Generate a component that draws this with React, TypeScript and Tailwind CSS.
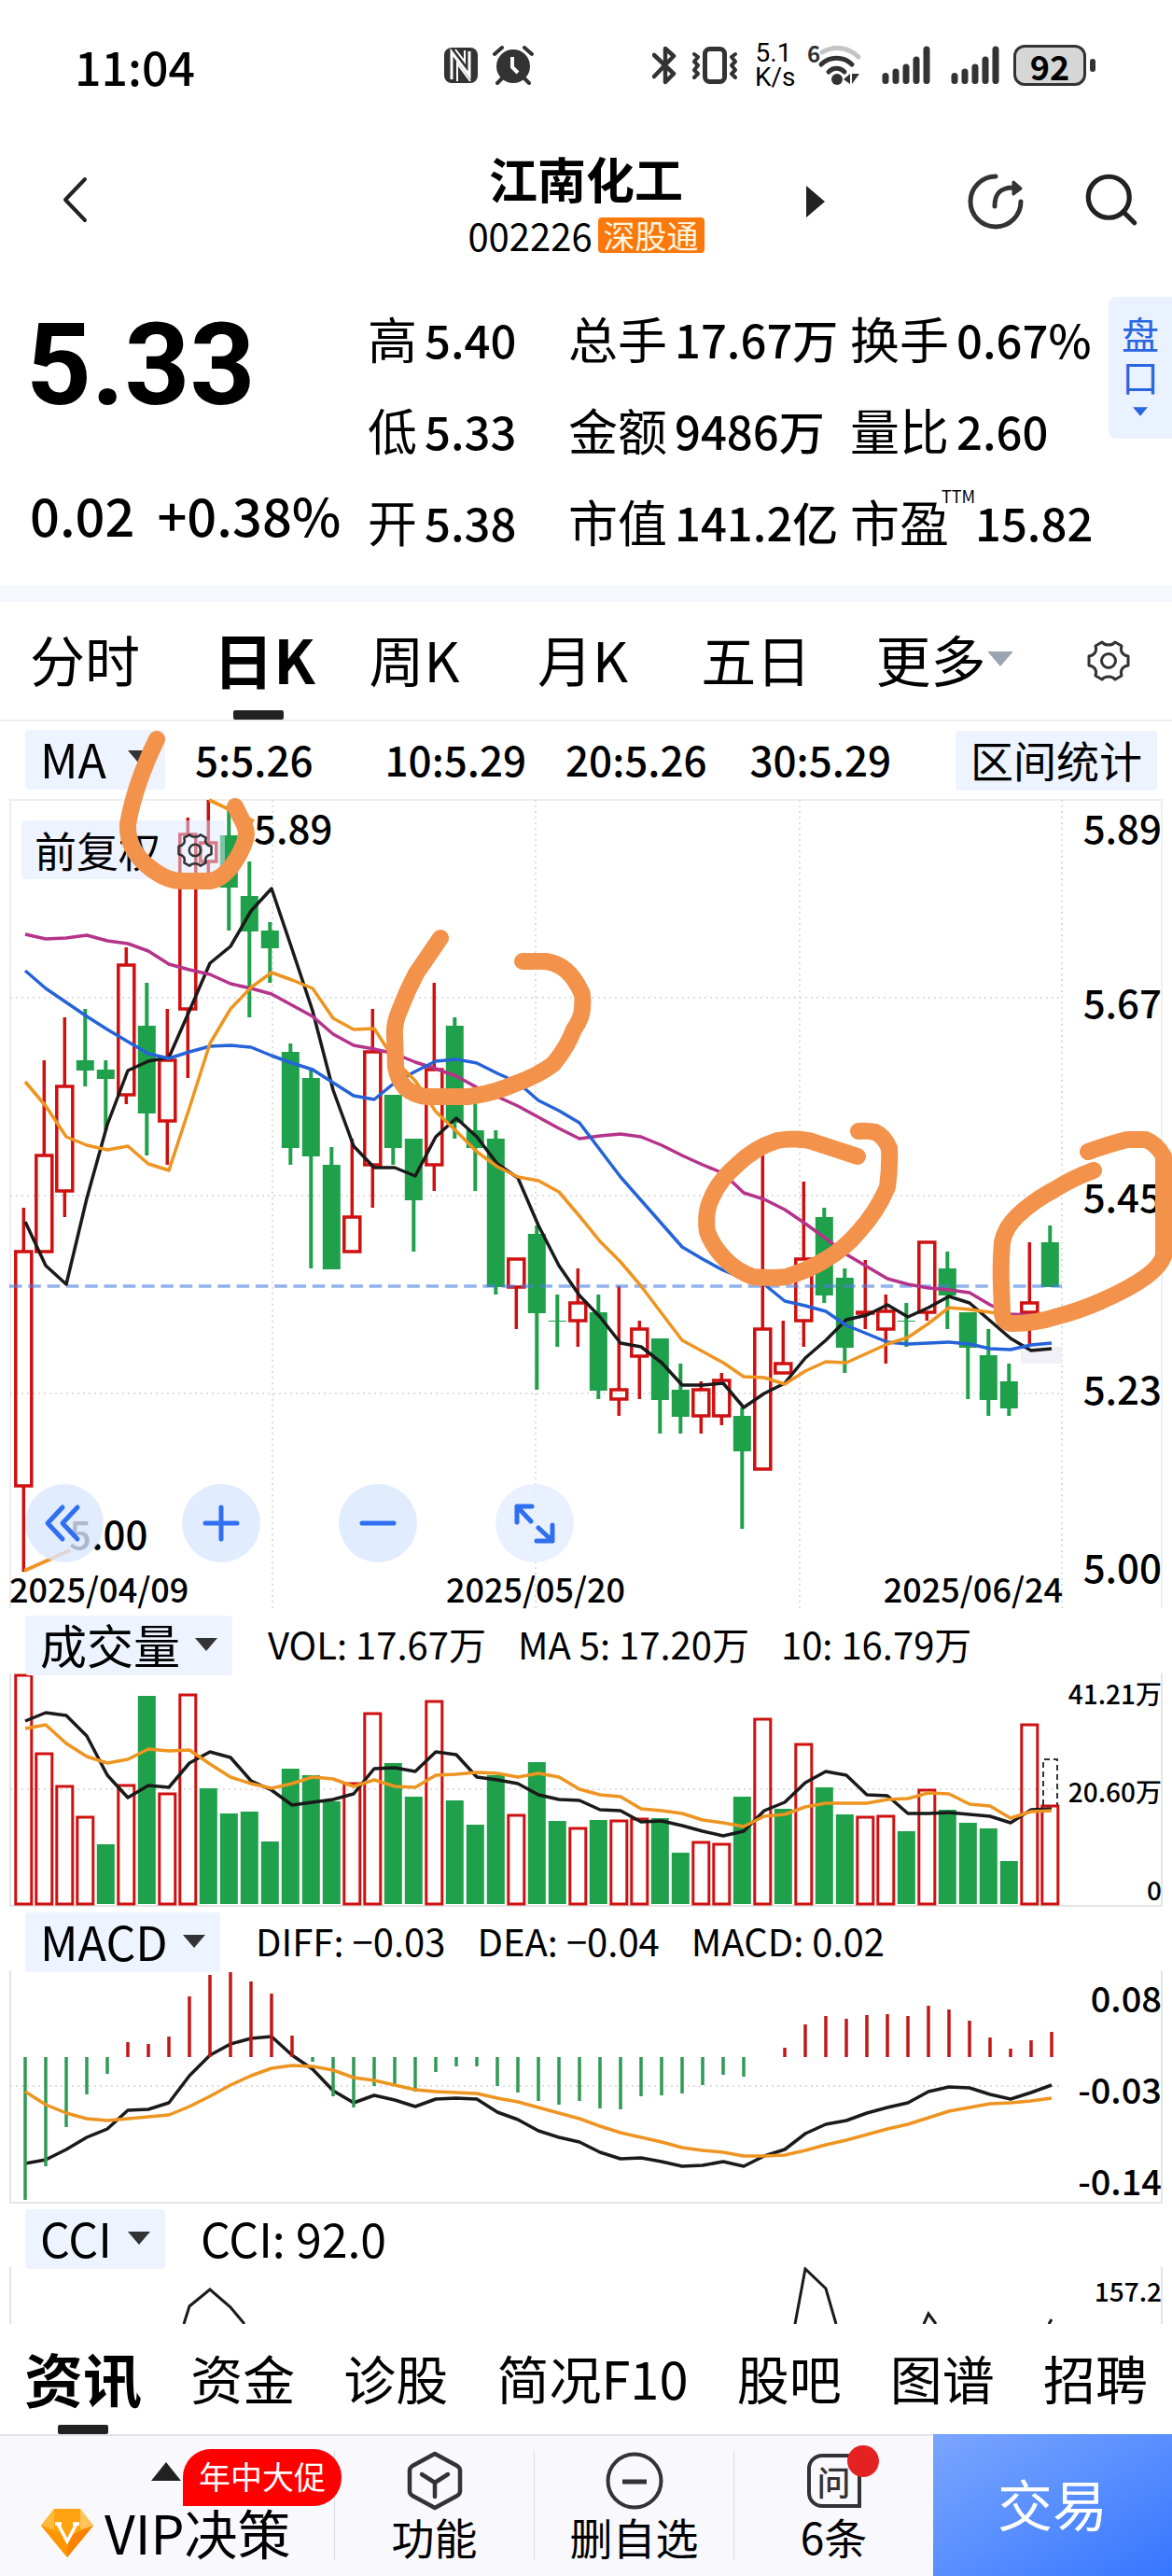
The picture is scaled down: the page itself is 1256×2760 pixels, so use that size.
import { ReactNode } from "react";
import { FiSearch } from "react-icons/fi";

type Candle = [up: number, high: number, top: number, bottom: number, low: number];

const RED = "#cf1010";
const GREEN = "#1fa04a";
const BLACK = "#1a1a1a";
const ORANGE = "#ee9420";

// 51 trading days, vertical values are in chart units
const candles: Candle[] = [
  [1, 1294, 1341, 1592, 1684],
  [1, 1136, 1238, 1341, 1341],
  [1, 1090, 1164, 1276, 1304],
  [0, 1081, 1136, 1147, 1164],
  [0, 1136, 1146, 1156, 1211],
  [1, 1015, 1034, 1173, 1183],
  [0, 1053, 1099, 1193, 1238],
  [1, 1081, 1136, 1201, 1248],
  [1, 876, 894, 1081, 1155],
  [1, 857, 903, 923, 940],
  [0, 868, 895, 951, 997],
  [0, 923, 960, 998, 1090],
  [0, 988, 997, 1016, 1053],
  [0, 1118, 1127, 1230, 1248],
  [0, 1146, 1155, 1239, 1359],
  [0, 1229, 1248, 1360, 1360],
  [1, 1220, 1304, 1341, 1341],
  [1, 1081, 1127, 1248, 1294],
  [0, 1173, 1173, 1230, 1248],
  [0, 1220, 1220, 1286, 1341],
  [1, 1053, 1146, 1248, 1276],
  [0, 1090, 1099, 1203, 1220],
  [0, 1173, 1211, 1230, 1276],
  [0, 1211, 1220, 1379, 1387],
  [1, 1349, 1349, 1379, 1424],
  [0, 1313, 1322, 1407, 1489],
  [0, 1387, 1415, 1416, 1443],
  [1, 1359, 1396, 1415, 1443],
  [0, 1387, 1406, 1490, 1499],
  [1, 1378, 1489, 1499, 1517],
  [1, 1415, 1424, 1453, 1499],
  [0, 1434, 1434, 1500, 1536],
  [0, 1461, 1489, 1518, 1536],
  [1, 1480, 1489, 1517, 1536],
  [1, 1471, 1479, 1517, 1527],
  [0, 1508, 1517, 1555, 1638],
  [1, 1238, 1424, 1574, 1574],
  [1, 1415, 1461, 1471, 1471],
  [1, 1266, 1349, 1415, 1443],
  [0, 1294, 1304, 1388, 1396],
  [0, 1359, 1369, 1444, 1471],
  [1, 1350, 1406, 1407, 1424],
  [1, 1387, 1405, 1424, 1461],
  [0, 1396, 1415, 1416, 1443],
  [1, 1331, 1331, 1406, 1415],
  [0, 1341, 1359, 1388, 1424],
  [0, 1406, 1406, 1444, 1499],
  [0, 1424, 1452, 1500, 1517],
  [0, 1461, 1480, 1509, 1517],
  [1, 1331, 1396, 1406, 1440],
  [0, 1313, 1331, 1379, 1379],
];

const ma5 = [
  1309, 1356, 1376, 1284, 1205, 1147, 1137, 1133, 1083, 1032, 1014, 976, 952, 1017, 1083, 1168, 1228,
  1251, 1251, 1260, 1218, 1198, 1218, 1247, 1262, 1313, 1356, 1388, 1411, 1439, 1443, 1460, 1484, 1484,
  1482, 1508, 1493, 1482, 1455, 1436, 1414, 1409, 1398, 1411, 1401, 1389, 1396, 1415, 1434, 1447, 1445,
];
const ma10 = [
  1159, 1185, 1218, 1227, 1232, 1228, 1247, 1254, 1187, 1118, 1081, 1058, 1042, 1050, 1059, 1091, 1103,
  1102, 1136, 1158, 1191, 1212, 1234, 1250, 1261, 1265, 1277, 1303, 1330, 1352, 1378, 1407, 1436, 1448,
  1460, 1475, 1476, 1483, 1469, 1459, 1460, 1450, 1440, 1433, 1418, 1401, 1403, 1406, 1409,
];
const ma20 = [
  1040, 1059, 1074, 1089, 1103, 1116, 1129, 1134, 1127, 1121, 1120, 1122, 1131, 1139, 1146, 1160, 1174,
  1178, 1160, 1148, 1137, 1135, 1139, 1150, 1160, 1179, 1190, 1203, 1232, 1261, 1286, 1311, 1336, 1349,
  1361, 1370, 1376, 1394, 1399, 1405, 1420, 1429, 1438, 1440, 1439, 1438, 1440, 1445, 1446, 1441, 1439,
];
const ma30 = [
  1001, 1006, 1005, 1002, 1008, 1011, 1019, 1033, 1039, 1044, 1054, 1059, 1065, 1077, 1089, 1108, 1120,
  1124, 1129, 1138, 1145, 1153, 1165, 1175, 1185, 1197, 1209, 1220, 1217, 1215, 1218, 1227, 1238, 1248,
  1257, 1278, 1285, 1296, 1311, 1327, 1344, 1357, 1370, 1376, 1380, 1382, 1385, 1398, 1408, 1409,
];

const volumes: [number, number][] = [
  [1, 1795], [1, 1879], [1, 1914], [1, 1947], [0, 1976], [1, 1913], [0, 1817], [1, 1922], [1, 1816],
  [0, 1916], [0, 1943], [0, 1941], [0, 1973], [0, 1895], [0, 1902], [0, 1930], [1, 1911], [1, 1836],
  [0, 1889], [0, 1925], [1, 1823], [0, 1929], [0, 1955], [0, 1902], [1, 1945], [0, 1888], [0, 1951],
  [1, 1959], [0, 1950], [1, 1951], [1, 1949], [0, 1948], [0, 1985], [1, 1974], [1, 1976], [0, 1925],
  [1, 1842], [0, 1938], [1, 1869], [0, 1915], [0, 1944], [1, 1947], [1, 1946], [0, 1962], [1, 1918],
  [0, 1939], [0, 1953], [0, 1959], [0, 1994], [1, 1848], [1, 1935],
];
const volMa5 = [
  1844, 1835, 1838, 1860, 1902, 1926, 1913, 1915, 1889, 1877, 1883, 1908, 1918, 1934, 1931, 1928, 1922,
  1895, 1894, 1898, 1877, 1880, 1904, 1907, 1911, 1923, 1928, 1929, 1939, 1940, 1952, 1951, 1956, 1962,
  1967, 1962, 1940, 1931, 1910, 1898, 1902, 1923, 1924, 1943, 1943, 1942, 1944, 1946, 1953, 1939, 1938,
];
const volMa10 = [
  1852, 1848, 1868, 1882, 1889, 1885, 1874, 1876, 1875, 1890, 1904, 1911, 1916, 1911, 1904, 1906, 1914,
  1907, 1914, 1915, 1902, 1901, 1899, 1900, 1904, 1900, 1904, 1917, 1923, 1925, 1938, 1940, 1943, 1950,
  1953, 1957, 1946, 1944, 1936, 1932, 1932, 1932, 1928, 1927, 1921, 1922, 1933, 1935, 1948, 1941, 1940,
];

const MACD_ZERO = 2204;
const macd = [
  2357, 2321, 2279, 2244, 2222, 2188, 2190, 2182, 2139, 2116, 2113, 2123, 2136, 2181, 2209, 2246, 2258,
  2235, 2234, 2241, 2220, 2214, 2214, 2235, 2242, 2251, 2255, 2251, 2259, 2260, 2246, 2245, 2243, 2234,
  2223, 2225, 2204, 2194, 2169, 2160, 2163, 2159, 2158, 2160, 2149, 2153, 2165, 2183, 2195, 2186, 2177,
];
const diff = [
  2318, 2314, 2303, 2290, 2281, 2261, 2260, 2253, 2224, 2202, 2190, 2184, 2182, 2202, 2217, 2240, 2253,
  2245, 2250, 2257, 2249, 2248, 2249, 2263, 2271, 2283, 2290, 2295, 2306, 2313, 2312, 2316, 2321, 2320,
  2316, 2321, 2310, 2303, 2286, 2276, 2272, 2264, 2258, 2253, 2241, 2236, 2237, 2244, 2249, 2242, 2234,
];
const dea = [
  2241, 2255, 2264, 2270, 2272, 2270, 2268, 2266, 2257, 2246, 2234, 2224, 2216, 2213, 2214, 2218, 2226,
  2229, 2234, 2239, 2241, 2242, 2243, 2248, 2252, 2258, 2264, 2270, 2278, 2285, 2290, 2295, 2301, 2304,
  2306, 2310, 2310, 2309, 2304, 2298, 2293, 2287, 2281, 2276, 2269, 2262, 2258, 2254, 2253, 2251, 2248,
];

const barX = (i: number) => 25.3 + i * 22;
const lineX = (i: number) => 27 + i * 22;

function Line({ data, color }: { data: number[]; color: string }) {
  return (
    <polyline
      points={data.map((y, i) => `${lineX(i)},${y}`).join(" ")}
      fill="none"
      stroke={color}
      strokeWidth="3.500"
      strokeLinejoin="round"
    />
  );
}

function Triangle({ className }: { className: string }) {
  return (
    <svg viewBox="0 0 24 14" className={className} aria-hidden="true">
      <path d="M0 0h24L12 14z" fill="currentColor" />
    </svg>
  );
}

function Gear({ className }: { className: string }) {
  return (
    <svg viewBox="0 0 48 48" className={className} fill="none" stroke="currentColor" strokeWidth="3" strokeLinejoin="round" aria-hidden="true">
      <path d="M17 4c3 4 11 4 14 0l7 4c-2 6 1 10 7 11v10c-6 1-9 5-7 11l-7 4c-3-4-11-4-14 0l-7-4c2-6-1-10-7-11V19c6-1 9-5 7-11z" />
      <circle cx="24" cy="24" r="7.5" />
    </svg>
  );
}

function IndicatorSelect({ name, label }: { name: string; label: string }) {
  return (
    <div className="relative shrink-0">
      <select
        aria-label={label}
        className="h-16 min-w-[150px] appearance-none rounded-sm bg-[#edf3ff] pr-14 pb-1 pl-4 text-[50px] leading-[60px] text-black"
      >
        <option>{name}</option>
      </select>
      <Triangle className="pointer-events-none absolute top-6 right-4 h-[14px] w-6 text-[#333]" />
    </div>
  );
}

function IndicatorHeader({ name, label, children }: { name: string; label: string; children: ReactNode }) {
  return (
    <div className="flex h-[70px] gap-[38px] pt-2 pl-[27px] whitespace-nowrap">
      <IndicatorSelect name={name} label={label} />
      {children}
    </div>
  );
}

function StatusBar() {
  return (
    <div className="flex h-36 items-center pr-[82px] pb-1 pl-20">
      <span className="w-[396px] text-[50px] leading-[56px] font-medium">11:04</span>
      <div className="flex items-center gap-4">
        <svg viewBox="0 0 36 38" className="h-[38px] w-9" aria-hidden="true">
          <rect width="36" height="38" rx="8" fill="#333" />
          <path d="M8 34V5l19 25V4" fill="none" stroke="#fff" strokeWidth="3" />
          <path d="M14 36V17l14 19M22 3v12L12 2" fill="none" stroke="#fff" strokeWidth="2" />
        </svg>
        <svg viewBox="0 0 44 42" className="h-[42px] w-11" aria-hidden="true">
          <circle cx="22" cy="22" r="18" fill="#333" />
          <path d="M2 9l8-7M42 9l-8-7M10 35l-5 5M34 35l5 5" stroke="#333" strokeWidth="4" strokeLinecap="round" />
          <path d="M21 12v11l6 6" fill="none" stroke="#fff" strokeWidth="4" />
        </svg>
      </div>
      <div className="ml-auto flex items-center">
        <svg viewBox="0 0 26 42" className="h-[42px] w-[26px]" fill="none" stroke="#333" strokeWidth="4.500" strokeLinejoin="round" strokeLinecap="round" aria-hidden="true">
          <path d="M2 10l21 20-9 9V3l9 8L2 33" />
        </svg>
        <svg viewBox="0 0 50 42" className="ml-4 h-[42px] w-[50px]" fill="none" stroke="#333" aria-hidden="true">
          <rect x="14.500" y="3.500" width="21" height="35" rx="5" strokeWidth="5" />
          <path d="M3 9l4 3-4 5 4 4-4 5 4 4-4 4M47 9l-4 3 4 5-4 4 4 5-4 4 4 4" strokeWidth="4" strokeLinecap="round" strokeLinejoin="round" />
        </svg>
        <div className="ml-[18px] w-10 text-center font-[Roboto,sans-serif] text-[28px] leading-[26px]">
          <div>5.1</div>
          <div>K/s</div>
        </div>
        <svg viewBox="0 0 58 44" className="ml-4 h-11 w-[58px] overflow-visible" aria-hidden="true">
          <text x="0" y="19" fontSize="24" fontWeight="700" fill="#333">6</text>
          <g fill="none" strokeWidth="5" strokeLinecap="round">
            <path d="M16 8c12-7 28-6 39 5" stroke="#c4c4c4" />
            <path d="M15 21c9-9 24-9 33 0M23 29c5-5 12-5 17 0" stroke="#333" />
          </g>
          <circle cx="32" cy="37" r="6" fill="#333" />
          <path d="M46 31v11l-7-5zM48 31v11l8-11z" fill="#333" />
        </svg>
        {[0, 1].map((n) => (
          <svg key={n} viewBox="0 0 52 42" className="ml-[22px] h-[42px] w-[52px]" stroke="#333" strokeWidth="7" strokeLinecap="round" aria-hidden="true">
            <path d="M4 32.500v5M15 28v9.500M26 23v14.500M37 15v22.500M48 4v33.500" />
          </svg>
        ))}
        <div className="ml-[15px] flex h-11 w-[78px] items-center justify-center rounded-xl border-[3px] border-[#333] bg-[#d6d6d6] text-4xl leading-9 font-bold">
          92
        </div>
        <div className="ml-1 h-3.5 w-1.5 rounded-full bg-[#333]" />
      </div>
    </div>
  );
}

function Header() {
  return (
    <header className="relative flex h-36 items-center justify-between pr-8 pl-[66px]">
      <button type="button" aria-label="返回" className="pb-1">
        <svg viewBox="0 0 28 50" className="h-[50px] w-7" fill="none" stroke="#222" strokeWidth="4" strokeLinecap="round" strokeLinejoin="round">
          <path d="M25 3L4 25l21 22" />
        </svg>
      </button>
      <div className="absolute inset-x-0 top-4 mx-auto flex w-[260px] flex-col items-center">
        <h1 className="text-[52px] leading-[62px] font-bold">江南化工</h1>
        <div className="flex h-[60px] items-center gap-1.5 text-[40px]">
          <span className="leading-[60px]">002226</span>
          <span className="rounded-sm bg-[#fa780c] px-1.5 text-[34px] leading-[38px] text-[#fff6e0]">深股通</span>
        </div>
      </div>
      <div className="flex items-center">
        <button type="button" aria-label="下一只" className="mr-[152px]">
          <svg viewBox="0 0 20 34" className="h-[34px] w-5">
            <path d="M0 0l20 17L0 34z" fill="#222" />
          </svg>
        </button>
        <button type="button" aria-label="分享" className="mr-[60px]">
          <svg viewBox="0 0 62 62" className="h-[62px] w-[62px]" fill="none" stroke="#333" strokeWidth="5" strokeLinecap="round">
            <path d="M31 4A27 27 0 1 0 58 31" />
            <path d="M30 36c0-14 6-20 20-20" />
            <path d="M50 10l8 7-8 6z" fill="#333" strokeWidth="3" strokeLinejoin="round" />
          </svg>
        </button>
        <button type="button" aria-label="搜索" className="pb-1">
          <FiSearch className="size-[66px] stroke-[1.9] text-[#222]" />
        </button>
      </div>
    </header>
  );
}

function Quote({ label, value, sup }: { label: string; value: string; sup?: string }) {
  return (
    <div className="flex h-[98px] items-center gap-2 whitespace-nowrap">
      <dt className="relative text-[53px]">
        {label}
        {sup && <sup className="absolute top-0 left-[98px] text-lg leading-6">{sup}</sup>}
      </dt>
      <dd className={sup ? "ml-5 text-[49px] font-medium" : "text-[49px] font-medium"}>{value}</dd>
    </div>
  );
}

function QuotePanel() {
  return (
    <section className="relative grid grid-cols-[394fr_215fr_302fr_345fr] pt-[26px] pb-[19px]">
      <div className="flex flex-col pl-8 whitespace-nowrap">
        <div className="-ml-1 h-[180px] font-[Roboto,sans-serif] text-[122px] leading-[156px] font-bold">5.33</div>
        <div className="flex h-[114px] items-center gap-6 text-[56px] font-medium">
          <span>0.02</span>
          <span>+0.38%</span>
        </div>
      </div>
      <dl>
        <Quote label="高" value="5.40" />
        <Quote label="低" value="5.33" />
        <Quote label="开" value="5.38" />
      </dl>
      <dl>
        <Quote label="总手" value="17.67万" />
        <Quote label="金额" value="9486万" />
        <Quote label="市值" value="141.2亿" />
      </dl>
      <dl>
        <Quote label="换手" value="0.67%" />
        <Quote label="量比" value="2.60" />
        <Quote label="市盈" value="15.82" sup="TTM" />
      </dl>
      <button
        type="button"
        className="absolute top-[30px] right-0 flex h-[152px] w-[68px] flex-col items-center rounded-l-lg bg-[#eaf1ff] pt-4 text-[40px] leading-[46px] text-[#2a66e0]"
      >
        <span>盘</span>
        <span>口</span>
        <Triangle className="mt-2.5 h-2.5 w-4" />
      </button>
    </section>
  );
}

function PeriodTabs() {
  const plain = ["周K", "月K", "五日"];
  return (
    <nav className="grid h-32 grid-cols-[196fr_167fr_180fr_175fr_187fr_225fr_92fr] border-b-2 border-[#ececf0] pl-8 text-[59px] whitespace-nowrap">
      <button type="button" className="pb-1 text-left">分时</button>
      <button type="button" className="relative pb-1 text-left text-[65px] font-bold">
        日K
        <span className="absolute bottom-0 left-[22px] h-2.5 w-[54px] rounded-xs bg-[#222]" />
      </button>
      {plain.map((t) => (
        <button key={t} type="button" className="pb-1 text-left">{t}</button>
      ))}
      <button type="button" className="flex items-center pb-1">
        更多
        <Triangle className="h-4 w-8 text-[#9aa5b0]" />
      </button>
      <button type="button" aria-label="设置">
        <Gear className="size-12 text-[#333]" />
      </button>
    </nav>
  );
}

function Marks() {
  // freehand marker circles over the candles
  return (
    <svg
      viewBox="0 773 1256 950"
      className="pointer-events-none absolute inset-0 w-full"
      fill="none"
      stroke="#f2924b"
      strokeWidth="18"
      strokeLinecap="round"
      strokeLinejoin="round"
      aria-hidden="true"
    >
      <path d="M168 792C152 825 142 855 137 883C136 905 148 920 161 930S185 945 200 944H225C240 942 252 925 259 910S264 890 262 884L252 864" />
      <path d="M472 1005L446 1043Q436 1062 428 1083Q422 1097 423 1110L424 1143Q426 1156 434 1165Q444 1174 458 1175H502Q530 1171 550 1162Q578 1152 593 1140Q608 1122 615 1103Q624 1090 624 1080Q625 1067 623 1063Q616 1048 607 1040Q598 1032 585 1030H560" />
      <path d="M919 1239L867 1222Q850 1219 833 1222Q808 1230 790 1248Q770 1265 762 1285Q755 1300 758 1320Q764 1336 778 1350Q790 1362 807 1368Q828 1370 843 1368Q868 1360 884 1350Q905 1338 920 1320Q940 1298 951 1272Q954 1250 953 1230Q947 1217 938 1213Q930 1211 920 1212" />
      <path d="M1172 1254Q1150 1262 1131 1274Q1108 1286 1091 1302Q1077 1315 1074 1331Q1072 1355 1073 1376L1074 1408Q1076 1418 1084 1418Q1110 1418 1131 1411Q1158 1404 1180 1394Q1210 1381 1228 1368Q1243 1357 1247 1346V1239Q1240 1226 1228 1221H1208Q1188 1226 1166 1234" />
    </svg>
  );
}

const roundButton = "flex size-[84px] items-center justify-center rounded-full bg-[#dbe7ff]/80";

function KLine() {
  const icon = "size-[44px] fill-none stroke-[#2f6ff0] stroke-[5] [stroke-linecap:round] [stroke-linejoin:round]";
  return (
    <section className="relative">
      <div className="flex h-[83px] items-center pr-4 pl-[27px] text-[46px] whitespace-nowrap">
        <IndicatorSelect name="MA" label="主图指标" />
        <div className="ml-8 grid flex-1 grid-cols-[203fr_193fr_197fr_220fr] pb-1 text-[44px] font-medium">
          <span>5:5.26</span>
          <span>10:5.29</span>
          <span>20:5.26</span>
          <span>30:5.29</span>
        </div>
        <button type="button" className="h-16 rounded-sm bg-[#edf3ff] px-4 pb-1 leading-[60px]">区间统计</button>
      </div>
      <div className="relative">
        <svg viewBox="0 856 1256 867" className="block w-full overflow-visible" role="img" aria-label="日K线图">
          <path d="M11 1723V857H1245V1723" fill="none" stroke="#eeeeee" strokeWidth="2" />
          <path d="M11 1069H1138M11 1281H1138M11 1493H1138M292 857V1723M574 857V1723M857 857V1723M1138 857V1723" stroke="#dedede" strokeWidth="2" strokeDasharray="2 4" />
          <rect x="1094" y="1443" width="44" height="18" fill="#f0f0f6" />
          {candles.map(([up, high, top, bottom, low], i) => {
            const x = barX(i);
            return up ? (
              <g key={i} stroke={RED} strokeWidth="3.500" fill="none">
                <path d={`M${x} ${high}V${top}M${x} ${bottom}V${low}`} />
                <rect x={x - 8.5} y={top} width="17" height={bottom - top} />
              </g>
            ) : (
              <g key={i} fill={GREEN}>
                <rect x={x - 2} y={high} width="4" height={low - high} />
                <rect x={x - 9.5} y={top} width="19" height={bottom - top} />
              </g>
            );
          })}
          <path d="M10 1378H1138" stroke="#4a7fe0" strokeOpacity="0.6" strokeWidth="3.500" strokeDasharray="13.500 6.800" />
          <Line data={ma5} color={BLACK} />
          <Line data={ma30} color="#b5338a" />
          <Line data={ma20} color="#2563d8" />
          <Line data={ma10} color={ORANGE} />
          <path d="M224 857L245 867L272 880M26 1683L75 1661" fill="none" stroke={ORANGE} strokeWidth="4" />
          <g className="text-[42px] font-medium" fill="#000">
            <text x="272" y="904">5.89</text>
            <text x="74" y="1660">5.00</text>
            <g textAnchor="end">
              <text x="1245" y="904">5.89</text>
              <text x="1245" y="1091">5.67</text>
              <text x="1245" y="1299">5.45</text>
              <text x="1245" y="1505">5.23</text>
              <text x="1245" y="1696">5.00</text>
            </g>
          </g>
          <g className="text-[36px] font-medium" fill="#000">
            <text x="10" y="1717">2025/04/09</text>
            <text x="574" y="1717" textAnchor="middle">2025/05/20</text>
            <text x="1139" y="1717" textAnchor="end">2025/06/24</text>
          </g>
        </svg>
        <button
          type="button"
          className="absolute top-[23px] left-[23px] flex h-[63px] w-[218px] items-center justify-between rounded-sm bg-[#dce8ff]/50 pr-3 pl-3.5 text-[45px] leading-[63px] whitespace-nowrap"
        >
          前复权
          <Gear className="size-10 text-[#333]" />
        </button>
        <div className="absolute bottom-[49px] left-[27px] flex gap-[84px]">
          <button type="button" aria-label="向左" className={roundButton}>
            <svg viewBox="0 0 44 44" className={icon}>
              <path d="M20 5L4 22l16 17M36 5L20 22l16 17" />
            </svg>
          </button>
          <button type="button" aria-label="放大" className={roundButton}>
            <svg viewBox="0 0 44 44" className={icon}>
              <path d="M22 5v34M5 22h34" />
            </svg>
          </button>
          <button type="button" aria-label="缩小" className={roundButton}>
            <svg viewBox="0 0 44 44" className={icon}>
              <path d="M5 22h34" />
            </svg>
          </button>
          <button type="button" aria-label="全屏" className="flex size-[84px] items-center justify-center rounded-full bg-[#e4edff]/80">
            <svg viewBox="0 0 44 44" className={icon}>
              <path d="M3 21V4h16M3 4l15 16M41 24v17H24M41 41L26 27" />
            </svg>
          </button>
        </div>
      </div>
      <Marks />
    </section>
  );
}

function Volume() {
  return (
    <section>
      <IndicatorHeader name="成交量" label="成交量指标">
        <div className="flex gap-[34px] text-[40px] leading-[60px]">
          <span>VOL: 17.67万</span>
          <span>MA 5: 17.20万</span>
          <span>10: 16.79万</span>
        </div>
      </IndicatorHeader>
      <svg viewBox="0 1793 1256 248" className="block w-full overflow-visible" role="img" aria-label="成交量图">
        <path d="M11 1793V2042H1245V1793" fill="none" stroke="#e4e4e4" strokeWidth="2" />
        <path d="M11 1917H1138" stroke="#dedede" strokeWidth="2" strokeDasharray="2 4" />
        {volumes.map(([up, top], i) =>
          up ? (
            <rect key={i} x={barX(i) - 8.5} y={top} width="17" height={2040 - top} fill="none" stroke={RED} strokeWidth="3" />
          ) : (
            <rect key={i} x={barX(i) - 9.5} y={top} width="19" height={2040 - top} fill={GREEN} />
          ),
        )}
        <path d="M1118 1934V1885H1133V1934" fill="none" stroke="#333" strokeWidth="2" strokeDasharray="6 4" />
        <Line data={volMa5} color={BLACK} />
        <Line data={volMa10} color={ORANGE} />
        <g className="text-[28px] font-medium" textAnchor="end">
          <text x="1245" y="1826">41.21万</text>
          <text x="1245" y="1931">20.60万</text>
          <text x="1245" y="2036">0</text>
        </g>
      </svg>
    </section>
  );
}

function Macd() {
  return (
    <section>
      <IndicatorHeader name="MACD" label="副图指标">
        <div className="flex gap-[34px] text-[40px] leading-[60px]">
          <span>DIFF: −0.03</span>
          <span>DEA: −0.04</span>
          <span>MACD: 0.02</span>
        </div>
      </IndicatorHeader>
      <svg viewBox="0 2111 1256 248" className="block w-full overflow-visible" role="img" aria-label="MACD图">
        <path d="M11 2111V2360H1245V2111" fill="none" stroke="#e4e4e4" strokeWidth="2" />
        <path d="M11 2235H1138" stroke="#dedede" strokeWidth="2" strokeDasharray="2 4" />
        <Line data={diff} color={BLACK} />
        {macd.map((y, i) => (
          <path key={i} d={`M${lineX(i)} ${MACD_ZERO}V${y}`} stroke={y < MACD_ZERO ? "#c01818" : "#2f9a55"} strokeWidth="3.500" />
        ))}
        <Line data={dea} color={ORANGE} />
        <g className="text-[38px] font-medium" textAnchor="end">
          <text x="1245" y="2156">0.08</text>
          <text x="1245" y="2254">-0.03</text>
          <text x="1245" y="2352">-0.14</text>
        </g>
      </svg>
    </section>
  );
}

function Cci() {
  return (
    <section>
      <IndicatorHeader name="CCI" label="副图指标二">
        <span className="text-[50px] leading-[60px]">CCI: 92.0</span>
      </IndicatorHeader>
      <svg viewBox="0 2429 1256 61" className="block w-full" role="img" aria-label="CCI图">
        <path d="M11 2429V2490M1245 2429V2490" stroke="#e4e4e4" strokeWidth="2" />
        <path
          d="M197 2490L203 2471L225 2453L247 2472L262 2490M852 2490L863 2431L885 2452L896 2490M990 2490L995 2479L1003 2490M1124 2490L1127 2485"
          fill="none"
          stroke={BLACK}
          strokeWidth="3"
        />
        <text x="1245" y="2466" textAnchor="end" className="text-[28px] font-medium">157.2</text>
      </svg>
    </section>
  );
}

function InfoTabs() {
  const tabs = ["资金", "诊股", "简况F10", "股吧", "图谱", "招聘"];
  return (
    <nav className="flex h-[118px] items-stretch justify-between px-[26px] text-[56px] whitespace-nowrap">
      <button type="button" className="relative pb-1 text-[63px] font-bold">
        资讯
        <span className="absolute bottom-0 left-9 h-2.5 w-[54px] rounded-xs bg-[#222]" />
      </button>
      {tabs.map((t) => (
        <button key={t} type="button" className="pb-1">{t}</button>
      ))}
    </nav>
  );
}

function BarItem({ label, children }: { label: string; children: ReactNode }) {
  return (
    <button type="button" className="my-4 flex flex-col items-center border-l border-[#dcdce2] text-[46px] leading-[54px]">
      {children}
      <span>{label}</span>
    </button>
  );
}

function BottomBar() {
  return (
    <div className="grid h-[152px] grid-cols-[358fr_214fr_214fr_214fr_256fr] border-t-2 border-[#e2e2e8] bg-[#f8f8fd] whitespace-nowrap">
      <button type="button" className="relative flex items-end pb-2.5 pl-11 text-[57px] leading-[76px]">
        <svg viewBox="0 0 56 52" className="mb-2.5 h-[52px] w-14" aria-hidden="true">
          <path d="M14 0h28l14 18-28 34L0 18z" fill="#ffa312" />
          <path d="M14 0L0 18l14 4z" fill="#ffb93c" />
          <path d="M42 0l14 18-14 4z" fill="#ffc55c" />
          <path d="M0 18l28 34V30z" fill="#ff9500" />
          <path d="M56 18L28 52V30z" fill="#f98200" />
          <path d="M18 16l10 19 10-19M15 16h7M34 16h7" fill="none" stroke="#fff" strokeWidth="3.500" />
        </svg>
        <span className="ml-3">VIP决策</span>
        <svg viewBox="0 0 32 20" className="absolute top-7 left-[162px] h-5 w-8" aria-hidden="true">
          <path d="M16 0l16 20H0z" fill="#222" />
        </svg>
        <span className="absolute top-3.5 left-[196px] z-10 h-[61px] rounded-[30px] rounded-bl-none bg-[#fe0000] px-[17px] text-[34px] leading-[58px] text-white">
          年中大促
        </span>
      </button>
      <BarItem label="功能">
        <svg viewBox="0 0 64 64" className="size-16" fill="none" stroke="#333" strokeWidth="4.500" strokeLinejoin="round" strokeLinecap="round" aria-hidden="true">
          <path d="M32 3l24 13q3 2 3 5v22q0 3-3 5L32 61 8 48q-3-2-3-5V21q0-3 3-5z" />
          <path d="M18 25l14 9 14-9M32 34v15" />
        </svg>
      </BarItem>
      <BarItem label="删自选">
        <svg viewBox="0 0 64 64" className="size-16" fill="none" stroke="#333" aria-hidden="true">
          <circle cx="32" cy="32" r="28.500" strokeWidth="4" />
          <path d="M19 33h26" strokeWidth="5" />
        </svg>
      </BarItem>
      <BarItem label="6条">
        <span className="relative flex h-16 w-16 items-center justify-center">
          <span className="flex size-[58px] items-center justify-center rounded-2xl rounded-br-none border-4 border-[#333] text-[36px] leading-9 font-medium text-[#333]">
            问
          </span>
          <span className="absolute -top-1.5 -right-4 size-[34px] rounded-full bg-[#e42222]" />
        </span>
      </BarItem>
      <button type="button" className="-mt-0.5 bg-linear-to-br from-[#7ba5ff] to-[#3576ff] pb-1 text-[59px] text-white">
        交易
      </button>
    </div>
  );
}

export default function App() {
  return (
    <main className="w-full overflow-x-hidden bg-white font-['Noto_Sans_CJK_SC','Noto_Sans',sans-serif] text-black">
      <StatusBar />
      <Header />
      <QuotePanel />
      <div className="h-[18px] bg-[#f7f8fd]" />
      <PeriodTabs />
      <KLine />
      <Volume />
      <Macd />
      <Cci />
      <InfoTabs />
      <BottomBar />
    </main>
  );
}
